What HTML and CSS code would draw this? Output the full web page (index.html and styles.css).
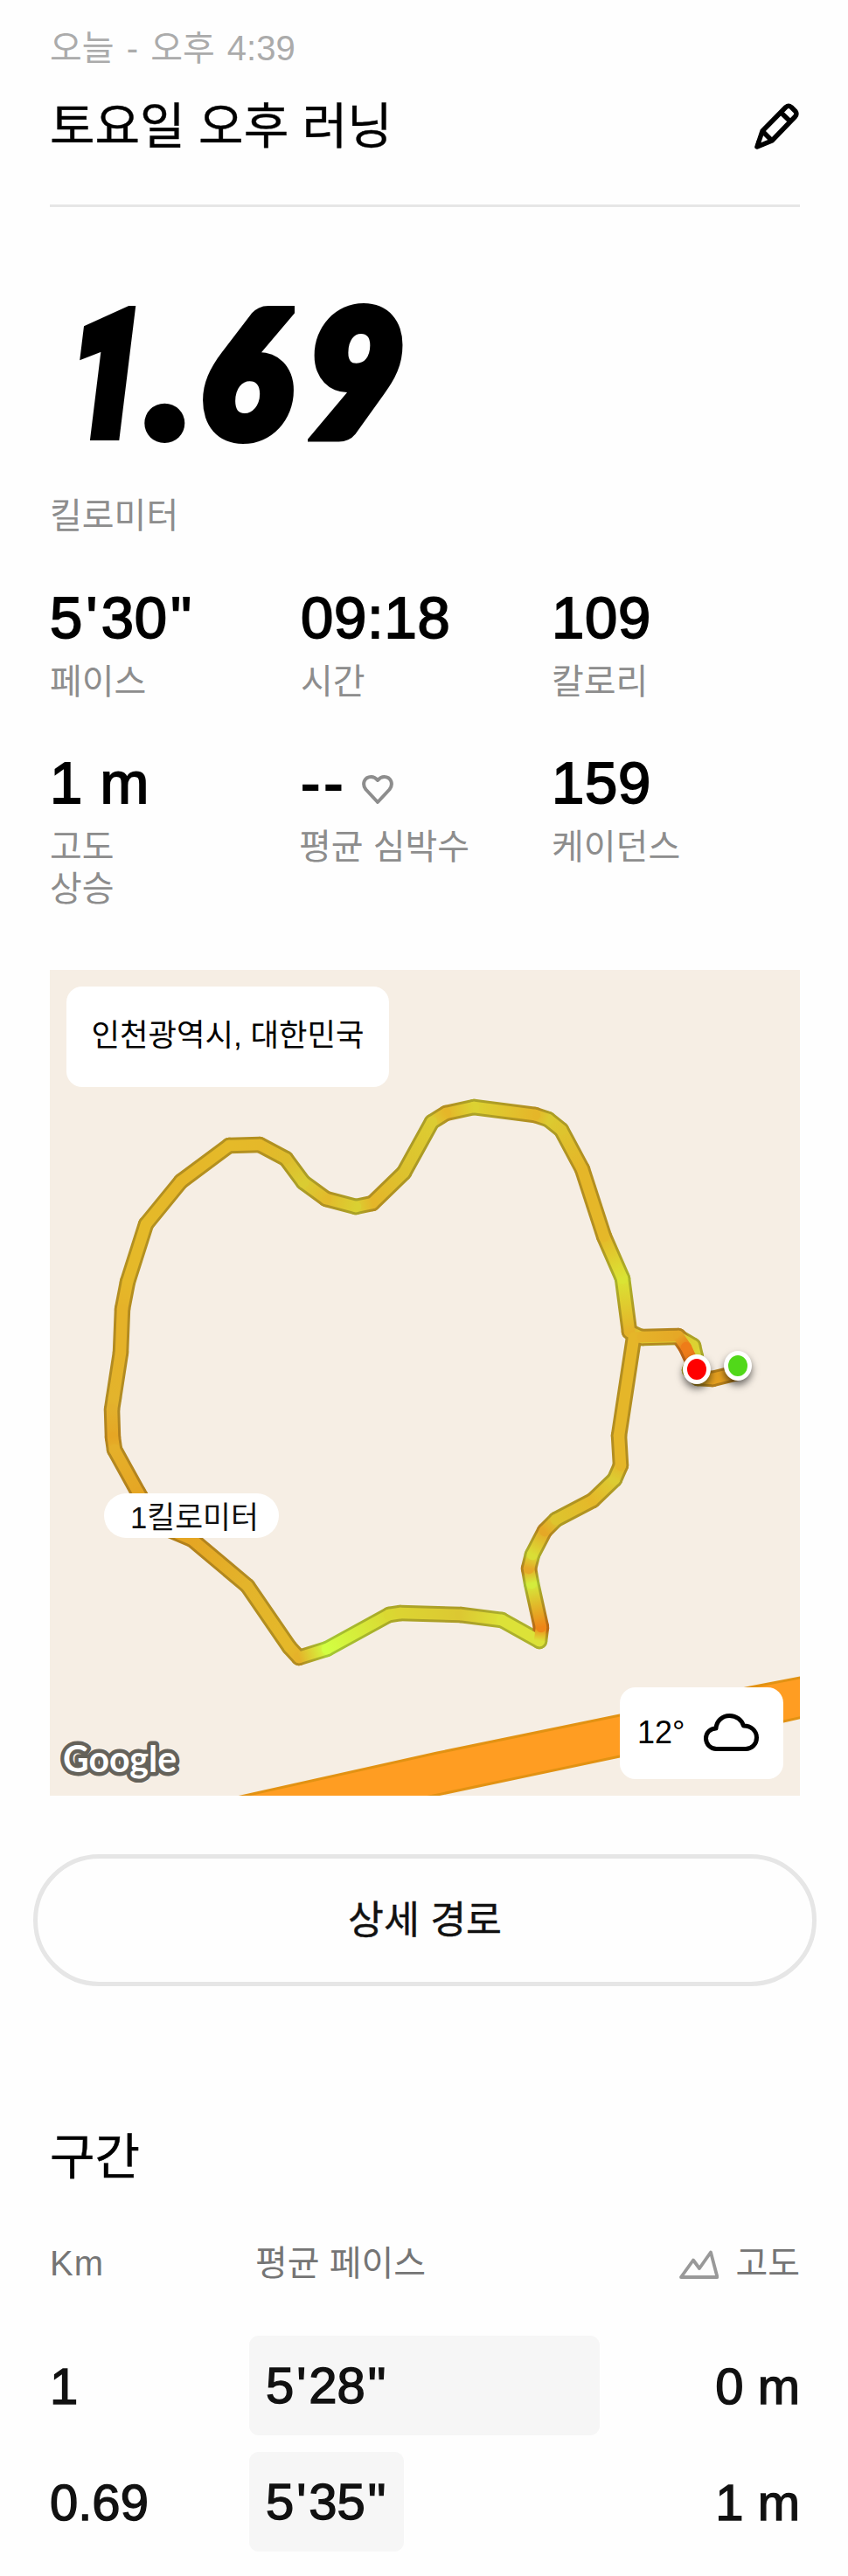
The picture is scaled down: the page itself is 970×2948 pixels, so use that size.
FILE: index.html
```html
<!DOCTYPE html>
<html lang="ko">
<head>
  <meta charset="UTF-8" />
  <meta name="viewport" content="width=device-width, initial-scale=1" />
  <title>토요일 오후 러닝</title>
  <link rel="stylesheet" href="styles.css">
</head>
<body>

  <header class="header">
    <p class="date">오늘 - 오후 4:39</p>
    <div class="title-row">
      <h1>토요일 오후 러닝</h1>
      <svg class="icon-edit" width="52" height="54" viewBox="0 0 52 54">
        <path d="M4 50 L10 32 L37 4.500 Q40 2 43 4.500 L48 9.500 Q50 12.500 47.500 15.500 L21 43 Z M10 32 L21 43 M31 10.500 L42 21" />
        <path class="tip" d="M2.500 51 L4.500 43.500 L11 48.500 Z" />
      </svg>
    </div>
  </header>

  <section class="distance">
    <div class="distance-value"><span class="one">1</span><span class="dot">.</span><span class="six">6</span><span class="nine">9</span></div>
    <p class="label">킬로미터</p>
  </section>

  <section class="stats">
    <div class="stat">
      <div class="value">5<span class="tick">'</span>30<span class="tick">"</span></div>
      <p class="label">페이스</p>
    </div>
    <div class="stat">
      <div class="value">09:18</div>
      <p class="label">시간</p>
    </div>
    <div class="stat">
      <div class="value">109</div>
      <p class="label">칼로리</p>
    </div>
    <div class="stat">
      <div class="value">1 m</div>
      <p class="label">고도<br>상승</p>
    </div>
    <div class="stat">
      <div class="value heart-value">--
        <svg class="icon-heart" width="36" height="34" viewBox="0 0 36 34">
          <path d="M18 31 L4.500 16.500 C-0.500 10 3 2 10.500 2 C14 2 16 3.500 18 6 C20 3.500 22 2 25.500 2 C33 2 36.500 10 31.500 16.500 Z" />
        </svg>
      </div>
      <p class="label heart-label">평균 심박수</p>
    </div>
    <div class="stat">
      <div class="value">159</div>
      <p class="label">케이던스</p>
    </div>
  </section>

  <!-- Map -->
  <section class="map">
    <svg class="map-canvas" width="858" height="945" viewBox="57 1110 858 945">
      <path class="road" d="M277 2056 L500 2006 L709 1963 L858 1931 L916 1919.500 L916 1965.500 L896 1970 L709 2010 L493 2056 Z" />
      <path class="road-edge" d="M273 2056.500 L500 2006 L709 1963 L858 1931 L918 1919.500 M918 1965 L896 1970 L709 2010 L486 2057" />
      <g id="route"></g>
    </svg>
    <span class="pin pin-start"></span>
    <span class="pin pin-end"></span>
    <div class="place">인천광역시, 대한민국</div>
    <div class="km-marker">1킬로미터</div>
    <div class="weather">
      <span>12°</span>
      <svg class="icon-cloud" width="63" height="44" viewBox="0 0 63 44">
        <path d="M14.500 40.500 A12 12 0 0 1 2.500 28.500 C2.500 22 7.500 17 14 17 C14.500 8.500 21 2.500 29.500 2.500 C37.500 2.500 43.500 7.500 45.500 14 C54 14 60.500 19.500 60.500 27.500 C60.500 35 55 40.500 48 40.500 Z" />
      </svg>
    </div>
    <svg class="google" width="160" height="75" viewBox="0 0 160 75">
      <text x="11" y="48" textLength="130" lengthAdjust="spacingAndGlyphs">Google</text>
    </svg>
  </section>

  <button class="route-button">상세 경로</button>

  <section class="splits">
    <h2>구간</h2>
    <div class="split split-head">
      <span class="km-title">Km</span>
      <span class="pace-title">평균 페이스</span>
      <span class="elevation">
        <svg class="icon-mountain" width="46" height="34" viewBox="0 0 46 34">
          <path d="M3 31 L17 11.500 L24 21 L37 2.500 L44.500 31 Z" />
        </svg>
        고도
      </span>
    </div>
    <div class="split">
      <span>1</span>
      <div class="track"><div class="bar" style="width: 401px">5<span class="tick">'</span>28<span class="tick">"</span></div></div>
      <span class="elevation">0 m</span>
    </div>
    <div class="split">
      <span>0.69</span>
      <div class="track"><div class="bar" style="width: 177px">5<span class="tick">'</span>35<span class="tick">"</span></div></div>
      <span class="elevation">1 m</span>
    </div>
  </section>

  <script src="route.js"></script>
</body>
</html>
```

FILE: styles.css
```css
* {
  box-sizing: border-box;
}

body {
  margin: 0;
  padding: 31px 55px 0 57px;
  background-color: #fefefe;
  color: #000;
  font-family: "Liberation Sans", "Noto Sans CJK KR", sans-serif;
}

h1, h2, p {
  margin: 0;
  font-weight: 400;
}

svg {
  display: block;
  flex: none;
}

.header {
  border-bottom: 3px solid #e6e6e6;
  padding-bottom: 49px;
}

.date {
  font-size: 40px;
  line-height: 49px;
  word-spacing: 3px;
  color: #ababab;
}

.title-row {
  display: flex;
  justify-content: space-between;
  align-items: center;
  margin-top: 25px;
}

h1, h2 {
  font-size: 56px;
  line-height: 80px;
  -webkit-text-stroke: 0.4px currentColor;
}

.icon-edit {
  margin-right: 1px;
}

.icon-edit path {
  fill: none;
  stroke: #000;
  stroke-width: 5.5;
  stroke-linejoin: round;
}

.icon-edit .tip {
  fill: #000;
  stroke-width: 2;
}

/* Distance */
.distance {
  margin-top: 88px;
}

.distance-value {
  display: flex;
  height: 200px;
  line-height: 196px;
  padding-left: 26px;
  font-family: Lato, sans-serif;
  font-weight: 900;
  font-style: italic;
  font-size: 197px;
  -webkit-text-stroke: 14px #000;
}

.distance-value span {
  transform-origin: left center;
}

.distance-value .one {
  width: 87px;
  font-family: Roboto, sans-serif;
  font-style: normal;
  line-height: 209px;
  transform: skewX(-7deg) scaleX(0.72);
}

.distance-value .dot {
  width: 60px;
}

.distance-value .six {
  width: 122px;
  transform: scaleX(0.955);
}

.distance-value .nine {
  transform: scaleX(0.955);
}

.label {
  font-size: 40px;
  line-height: 48.5px;
  color: #8d8d8d;
}

.distance .label {
  margin-top: 40.5px;
}

/* Stats */
.stats {
  display: grid;
  grid-template-columns: repeat(3, 287px);
  row-gap: 56px;
  margin-top: 58px;
}

.value {
  height: 70px;
  font-size: 67px;
  line-height: 70px;
  letter-spacing: 0.8px;
  -webkit-text-stroke: 1.8px currentColor;
}

.value .tick {
  margin: 0 3.5px;
}

.stat .label {
  margin-top: 14px;
}

.heart-value {
  display: flex;
  align-items: center;
  gap: 17px;
  letter-spacing: 4px;
}

.icon-heart {
  margin-top: 17px;
}

.icon-heart path {
  fill: none;
  stroke: #8d8d8d;
  stroke-width: 4;
  stroke-linejoin: round;
}

.heart-label {
  margin-left: -2px;
}

/* Map */
.map {
  position: relative;
  height: 945px;
  margin-top: 68.5px;
  background-color: #f6eee4;
  overflow: hidden;
}

.road {
  fill: #ff9d22;
}

.road-edge {
  fill: none;
  stroke: #e29213;
  stroke-width: 3;
}

.pin {
  position: absolute;
  width: 32px;
  height: 34px;
  border: 5.5px solid #fff;
  border-radius: 50%;
  box-shadow: 0 5px 8px rgba(0, 0, 0, 0.55);
}

.pin-start {
  left: 771px;
  top: 436px;
  background-color: #51d819;
}

.pin-end {
  left: 724px;
  top: 440px;
  background-color: #ff0000;
}

.place {
  position: absolute;
  left: 19px;
  top: 19px;
  width: 369px;
  height: 115px;
  border-radius: 18px;
  background-color: #fff;
  font-size: 35.3px;
  line-height: 112px;
  text-align: center;
  white-space: nowrap;
}

.km-marker {
  position: absolute;
  left: 62px;
  top: 599px;
  width: 200px;
  height: 51px;
  padding-left: 30px;
  border-radius: 26px;
  background-color: #fff;
  color: #111;
  font-size: 34.7px;
  line-height: 57px;
  white-space: nowrap;
}

.weather {
  position: absolute;
  left: 652px;
  top: 821px;
  display: flex;
  align-items: center;
  gap: 22px;
  width: 187px;
  height: 105px;
  padding: 0 0 2px 20px;
  border-radius: 18px;
  background-color: #fff;
  font-size: 36px;
  line-height: 40px;
}

.icon-cloud path {
  fill: none;
  stroke: #000;
  stroke-width: 5;
  stroke-linejoin: round;
}

.google {
  position: absolute;
  left: 4px;
  top: 870px;
}

.google text {
  font-family: Lato, sans-serif;
  font-size: 42px;
  font-weight: 700;
  fill: #fff;
  stroke: #65625a;
  stroke-width: 9;
  stroke-linejoin: round;
  paint-order: stroke;
}

.route-button {
  display: block;
  width: 896px;
  height: 151px;
  margin: 67px 0 0 -19px;
  padding: 0;
  border: 5px solid #e6e6e6;
  border-radius: 76px;
  background-color: #fefefe;
  color: #111;
  font-family: inherit;
  font-size: 44.5px;
  line-height: 50px;
  -webkit-text-stroke: 0.4px currentColor;
}

/* Splits */
.splits {
  margin-top: 156px;
}

.split {
  display: grid;
  grid-template-columns: 228px 401px 1fr;
  align-items: center;
  height: 114px;
  margin-bottom: 19px;
  color: #111;
  font-size: 58px;
  -webkit-text-stroke: 1.4px currentColor;
}

.split .tick {
  margin: 0 3px;
}

.split-head {
  height: 50px;
  margin: 56px 0 58px;
  color: #757575;
  font-size: 40px;
  line-height: 48px;
  -webkit-text-stroke: 0;
}

.km-title {
  letter-spacing: 1px;
}

.pace-title {
  padding-left: 7px;
}

.elevation {
  display: flex;
  justify-content: flex-end;
  align-items: center;
  gap: 19px;
}

.icon-mountain {
  margin-top: 4px;
}

.icon-mountain path {
  fill: none;
  stroke: #999;
  stroke-width: 3.8;
  stroke-linejoin: round;
}

.bar {
  height: 114px;
  padding-left: 19px;
  border-radius: 11px;
  background-color: #f6f6f6;
  line-height: 114px;
}
```

FILE: route.js
```js
// x, y, pace colour (green = fast, red = slow)
const route = [
  [843, 1571, [229, 160, 32]],
  [815, 1578, [229, 160, 32]],
  [798, 1577, [229, 184, 41]],
  [789, 1568, [220, 210, 50]],
  [796, 1553, [220, 220, 55]],
  [793, 1540, [220, 210, 50]],
  [776, 1530, [220, 200, 48]],
  [735, 1531, [220, 200, 48]],
  [720, 1524, [229, 178, 41]],
  [712, 1463, [218, 228, 52]],
  [691, 1415, [229, 184, 41]],
  [666, 1338, [229, 182, 41]],
  [642, 1293, [222, 196, 46]],
  [627, 1281, [220, 202, 48]],
  [612, 1276, [229, 182, 41]],
  [542, 1267, [220, 210, 50]],
  [510, 1274, [229, 182, 41]],
  [494, 1284, [220, 204, 50]],
  [462, 1342, [221, 194, 46]],
  [426, 1377, [229, 182, 41]],
  [407, 1381, [218, 208, 50]],
  [373, 1372, [227, 186, 43]],
  [347, 1353, [218, 204, 50]],
  [327, 1326, [222, 188, 44]],
  [297, 1310, [229, 184, 41]],
  [262, 1311, [229, 186, 41]],
  [207, 1352, [229, 182, 41]],
  [167, 1401, [229, 186, 41]],
  [146, 1467, [229, 184, 41]],
  [140, 1498, [229, 178, 41]],
  [138, 1548, [229, 178, 41]],
  [130, 1600, [227, 180, 44]],
  [128, 1613, [227, 176, 44]],
  [129, 1645, [229, 166, 36]],
  [131, 1659, [229, 176, 42]],
  [158, 1708, [229, 166, 36]],
  [180, 1745, [229, 166, 36]],
  [220, 1762, [229, 166, 36]],
  [283, 1815, [227, 180, 43]],
  [331, 1885, [229, 184, 41]],
  [342, 1897, [229, 178, 41]],
  [374, 1887, [210, 255, 66]],
  [445, 1848, [218, 216, 50]],
  [458, 1846, [220, 212, 50]],
  [527, 1848, [220, 200, 50]],
  [574, 1854, [220, 226, 56]],
  [617, 1878, [220, 226, 56]],
  [619, 1862, [238, 134, 24]],
  [608, 1812, [212, 236, 60]],
  [605, 1795, [229, 168, 38]],
  [609, 1779, [218, 222, 54]],
  [623, 1752, [229, 168, 38]],
  [636, 1739, [221, 196, 46]],
  [678, 1717, [229, 184, 41]],
  [703, 1693, [220, 204, 50]],
  [710, 1677, [229, 182, 41]],
  [708, 1643, [229, 182, 41]],
  [725, 1531, [229, 182, 41]],
  [735, 1530, [229, 178, 41]],
  [776, 1529, [229, 168, 38]],
  [785, 1542, [238, 124, 24]],
  [797, 1568, [238, 124, 24]]
];

const NS = 'http://www.w3.org/2000/svg';
const layer = document.getElementById('route');

function rgb(color, shade) {
  return 'rgb(' + color.map(c => Math.round(c * shade)).join(',') + ')';
}

function drawSegments(points, width, shade, name) {
  for (let i = 0; i < points.length - 1; i++) {
    const [x1, y1, from] = points[i];
    const [x2, y2, to] = points[i + 1];
    const id = name + i;

    const gradient = document.createElementNS(NS, 'linearGradient');
    gradient.setAttribute('id', id);
    gradient.setAttribute('gradientUnits', 'userSpaceOnUse');
    const line = document.createElementNS(NS, 'line');
    [['x1', x1], ['y1', y1], ['x2', x2], ['y2', y2]].forEach(([key, value]) => {
      gradient.setAttribute(key, value);
      line.setAttribute(key, value);
    });

    [from, to].forEach((color, n) => {
      const stop = document.createElementNS(NS, 'stop');
      stop.setAttribute('offset', n);
      stop.setAttribute('stop-color', rgb(color, shade));
      gradient.appendChild(stop);
    });

    line.setAttribute('stroke', 'url(#' + id + ')');
    line.setAttribute('stroke-width', width);
    line.setAttribute('stroke-linecap', 'round');
    layer.appendChild(gradient);
    layer.appendChild(line);
  }
}

drawSegments(route, 18.5, 0.78, 'edge');
drawSegments(route, 12.5, 1, 'fill');
```
